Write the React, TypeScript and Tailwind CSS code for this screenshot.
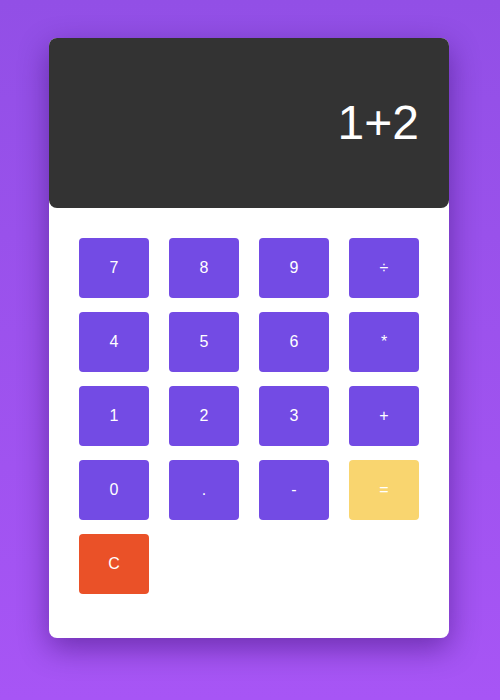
import React from "react";

const keys: { label: string; kind?: "eq" | "clear" }[] = [
  { label: "7" }, { label: "8" }, { label: "9" }, { label: "÷" },
  { label: "4" }, { label: "5" }, { label: "6" }, { label: "*" },
  { label: "1" }, { label: "2" }, { label: "3" }, { label: "+" },
  { label: "0" }, { label: "." }, { label: "-" }, { label: "=", kind: "eq" },
  { label: "C", kind: "clear" },
];

export default function App() {
  return (
    <div
      className="w-[500px] h-[700px] flex justify-start pl-[49px] pt-[38px] bg-gradient-to-b from-[#924fe6] to-[#a755f5]"
      style={{ fontFamily: '"Liberation Sans", Arial, sans-serif' }}
    >
      <div className="w-[400px] h-[600px] bg-white rounded-lg shadow-[0_10px_30px_rgba(40,0,90,0.45)] flex flex-col">
        <div className="h-[170px] bg-[#333333] rounded-lg flex items-center justify-end pr-[30px]">
          <span className="text-[48px] text-white leading-none">1+2</span>
        </div>
        <div className="grid grid-cols-[repeat(4,70px)] gap-x-[20px] gap-y-[14px] px-[30px] pt-[30px]">
          {keys.map((k) => (
            <button
              key={k.label}
              className={
                "h-[60px] w-[70px] rounded-[4px] text-white text-base flex items-center justify-center " +
                (k.kind === "eq"
                  ? "bg-[#f9d56f]"
                  : k.kind === "clear"
                  ? "bg-[#ea5128]"
                  : "bg-[#734be4]")
              }
            >
              {k.label}
            </button>
          ))}
        </div>
      </div>
    </div>
  );
}
